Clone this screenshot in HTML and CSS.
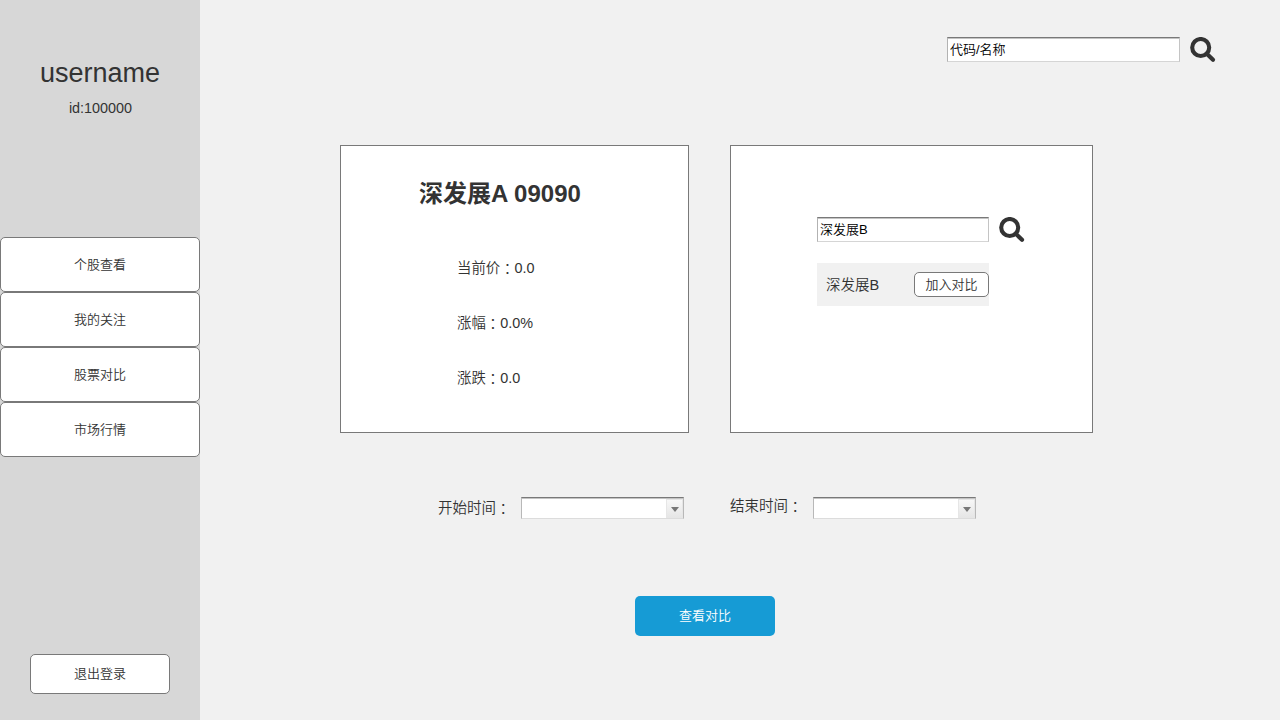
FILE: index.html
```html
<!DOCTYPE html>
<html lang="zh-CN">
<head>
<meta charset="utf-8">
<title>股票对比</title>
<link rel="stylesheet" href="styles.css">
</head>
<body>
<svg class="defs" aria-hidden="true">
  <symbol id="search" viewBox="0 0 26 26">
    <circle cx="10.7" cy="10.5" r="8.5" fill="none" stroke="currentColor" stroke-width="4.1"/>
    <path d="M17 17 23 22.8" fill="none" stroke="currentColor" stroke-width="4.2" stroke-linecap="round"/>
  </symbol>
</svg>
<div class="app">
  <aside class="sidebar">
    <div class="username">username</div>
    <div class="user-id">id:100000</div>
    <nav class="nav">
      <a class="nav-item">个股查看</a>
      <a class="nav-item">我的关注</a>
      <a class="nav-item">股票对比</a>
      <a class="nav-item">市场行情</a>
    </nav>
    <a class="logout">退出登录</a>
  </aside>
  <main class="main">
    <div class="search search-top">
      <div class="field">代码/名称</div>
      <svg class="icon"><use href="#search"/></svg>
    </div>
    <div class="cards">
      <section class="card card-stock">
        <h1 class="title">深发展A 09090</h1>
        <p class="stat">当前价<span class="colon" lang="zh-TW">：</span>0.0</p>
        <p class="stat">涨幅<span class="colon" lang="zh-TW">：</span>0.0%</p>
        <p class="stat">涨跌<span class="colon" lang="zh-TW">：</span>0.0</p>
      </section>
      <section class="card card-pick">
        <div class="search">
          <div class="field">深发展B</div>
          <svg class="icon"><use href="#search"/></svg>
        </div>
        <div class="result">
          <span class="result-name">深发展B</span>
          <a class="add">加入对比</a>
        </div>
      </section>
    </div>
    <div class="dates">
      <div class="date date-start">
        <span class="label">开始时间<span class="colon" lang="zh-TW">：</span></span>
        <div class="select"><span class="arrow"></span></div>
      </div>
      <div class="date date-end">
        <span class="label">结束时间<span class="colon" lang="zh-TW">：</span></span>
        <div class="select"><span class="arrow"></span></div>
      </div>
    </div>
    <a class="submit">查看对比</a>
  </main>
</div>
</body>
</html>
```
FILE: styles.css
```css
* { box-sizing: border-box; }
body {
  margin: 0;
  background: #f1f1f1;
  color: #333;
  font-family: "Liberation Sans", "Noto Sans CJK SC", sans-serif;
  font-size: 13px;
  font-weight: 350;
  white-space: nowrap;
}
.defs { display: none; }
.colon {
  display: inline-block;
  height: 20px;
  font-family: "Noto Sans CJK TC", sans-serif;
  line-height: 20px;
  vertical-align: top;
}
.app { display: flex; height: 720px; overflow: hidden; }

.sidebar {
  display: flex;
  flex-direction: column;
  align-items: center;
  width: 200px;
  padding: 58px 0 26px;
  background: #d7d7d7;
}
.username { font-size: 27px; line-height: 30px; }
.user-id { margin-top: 12px; padding-left: 1px; font-size: 14.4px; line-height: 16px; }
.nav { width: 100%; margin-top: 121px; }
.nav-item, .logout, .add {
  display: flex;
  align-items: center;
  justify-content: center;
  border: 1px solid #797979;
  border-radius: 5px;
  background: #fff;
  line-height: 18px;
}
.nav-item { height: 55px; }
.logout { width: 140px; height: 40px; margin-top: auto; }

.main { flex: 1; padding-top: 37px; }
.search { display: flex; gap: 10px; }
.search-top { margin-left: 747px; }
.field {
  width: 172px;
  height: 25px;
  padding: 0 2px;
  border: 1px solid;
  border-color: #797979 #c4c4c4 #d5d5d5 #b2b2b2;
  box-shadow: inset 0 1px #c4c4c4;
  background: #fff;
  color: #000;
  line-height: 24px;
}
.search-top .field { width: 233px; }
.icon { width: 26px; height: 26px; color: #333; }

.cards { display: flex; gap: 41px; margin: 82px 0 0 140px; }
.card { height: 288px; border: 1px solid #797979; background: #fff; }
.card-stock { width: 349px; padding: 32px 0 0 116px; }
.card-pick { width: 363px; padding: 71px 0 0 86px; }
.title { margin: 0 0 48px -38px; font-size: 24px; font-weight: 700; line-height: 32px; }
.stat { margin: 0 0 35px; font-size: 14.4px; line-height: 20px; height: 20px; }
.result {
  display: flex;
  align-items: center;
  justify-content: space-between;
  width: 172px;
  height: 43px;
  margin-top: 20px;
  padding-left: 9px;
  background: #f1f1f1;
}
.result-name { font-size: 14.5px; line-height: 20px; }
.add { width: 75px; height: 25px; }

.dates { display: flex; margin: 64px 0 0 238px; gap: 46px; }
.date { display: flex; align-items: center; height: 22px; }
.label { width: 83px; height: 20px; font-size: 14.5px; line-height: 20px; }
.date-end .label { margin-top: -4px; }
.select {
  display: flex;
  justify-content: flex-end;
  width: 163px;
  height: 22px;
  padding-top: 1px;
  border: 1px solid;
  border-color: #797979 #b8b8b8 #dcdcdc #b8b8b8;
  box-shadow: inset 0 1px #c4c4c4;
  background: #fff;
}
.arrow {
  display: flex;
  align-items: center;
  justify-content: center;
  width: 17px;
  border: 1px solid #e6e6e6;
  background: linear-gradient(#f7f7f7, #e6e6e6);
}
.arrow::after {
  content: "";
  flex: none;
  margin: 2px -1px 0 0;
  border: solid transparent;
  border-width: 5px 4.5px 0;
  border-top-color: #777;
}

.submit {
  display: flex;
  align-items: center;
  justify-content: center;
  width: 140px;
  height: 40px;
  margin: 77px 0 0 435px;
  border-radius: 5px;
  background: #169bd5;
  color: #fff;
  line-height: 18px;
}
```
